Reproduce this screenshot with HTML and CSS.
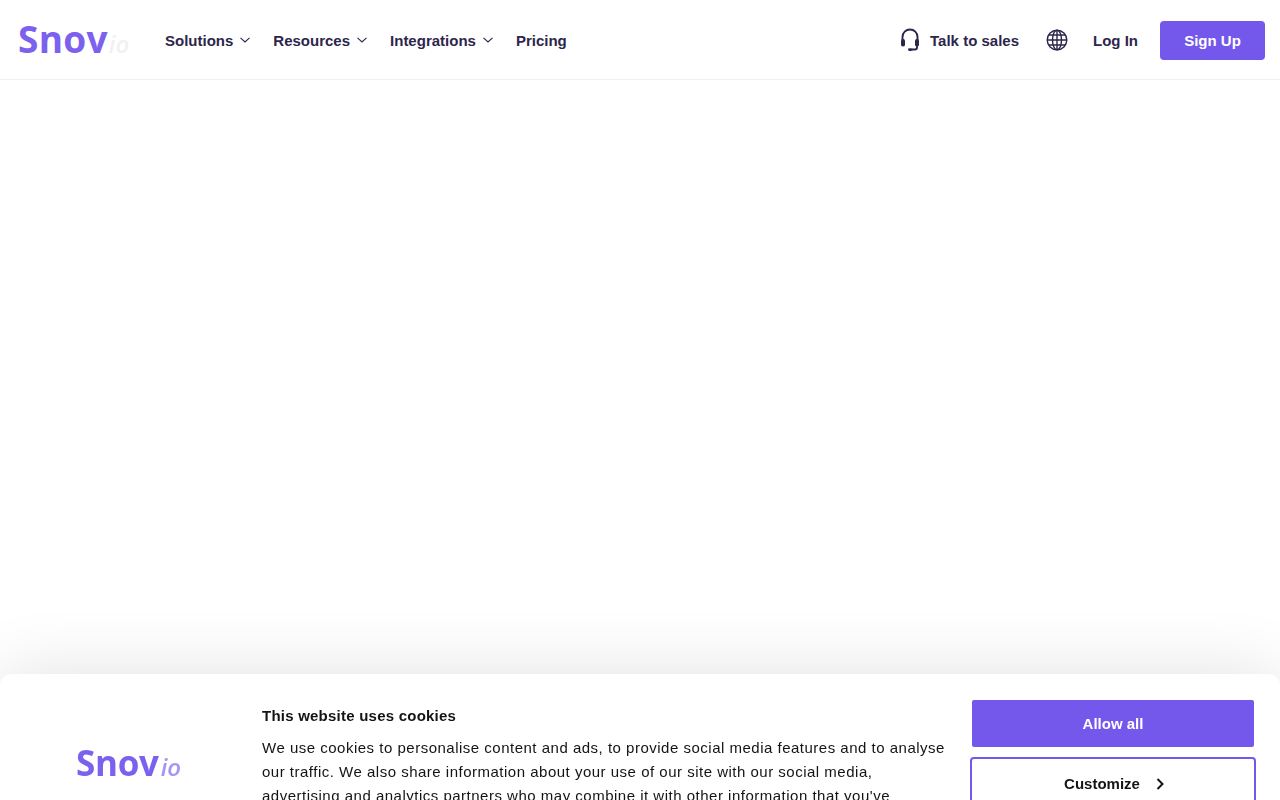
FILE: index.html
```html
<!DOCTYPE html>
<html lang="en">
<head>
    <meta charset="UTF-8">
    <meta name="viewport" content="width=device-width, initial-scale=1.0">
    <title>Snov.io</title>
    <link rel="stylesheet" href="styles.css">
</head>
<body>
    <header class="site-header">
        <a class="logo" href="#"><span class="logo-main">Snov</span><span class="logo-io">io</span></a>
        <nav class="main-nav">
            <a href="#">Solutions <svg class="chevron" viewBox="0 0 10 6"><path d="M.5.8 5 5 9.500.8"/></svg></a>
            <a href="#">Resources <svg class="chevron" viewBox="0 0 10 6"><path d="M.5.8 5 5 9.500.8"/></svg></a>
            <a href="#">Integrations <svg class="chevron" viewBox="0 0 10 6"><path d="M.5.8 5 5 9.500.8"/></svg></a>
            <a href="#">Pricing</a>
        </nav>
        <div class="header-actions">
            <a class="sales-link" href="#">
                <svg class="headset" viewBox="0 0 20 24">
                    <path class="line" d="M2.500 12V9a7.500 7.500 0 0 1 15 0v3"/>
                    <rect x="1" y="11" width="4" height="7.500" rx="1.800"/>
                    <rect x="15" y="11" width="4" height="7.500" rx="1.800"/>
                    <path class="line" d="M17 18v1.500a2 2 0 0 1-2 2h-3"/>
                    <rect x="8" y="20.300" width="4.500" height="2.600" rx="1.300"/>
                </svg>
                Talk to sales
            </a>
            <svg class="globe" viewBox="0 0 22 22">
                <circle cx="11" cy="11" r="9.800"/>
                <ellipse cx="11" cy="11" rx="4.500" ry="9.800"/>
                <path d="M11 1.200v19.600M1.200 11h19.600M2.600 6h16.800M2.600 16h16.800"/>
            </svg>
            <a class="login-link" href="#">Log In</a>
            <a class="signup-btn" href="#">Sign Up</a>
        </div>
    </header>

    <div class="cookie-banner">
        <div class="cookie-logo">
            <a class="logo logo-small" href="#"><span class="logo-main">Snov</span><span class="logo-io">io</span></a>
        </div>
        <div class="cookie-text">
            <h2>This website uses cookies</h2>
            <p>We use cookies to personalise content and ads, to provide social media features and to analyse our traffic. We also share information about your use of our site with our social media, advertising and analytics partners who may combine it with other information that you've provided to them or that they've collected from your use of their services.</p>
        </div>
        <div class="cookie-buttons">
            <button class="allow-btn">Allow all</button>
            <button class="customize-btn">Customize <svg class="customize-arrow" viewBox="0 0 8 12"><path d="M1.500 1 6.500 6l-5 5"/></svg></button>
        </div>
    </div>
</body>
</html>
```

FILE: styles.css
```css
html, body {
    height: 100%;
}

body {
    font-family: "Liberation Sans", Arial, sans-serif;
    margin: 0;
    padding: 0;
    background-color: #fff;
    color: #2d264c;
    overflow: hidden;
}

a {
    color: inherit;
    text-decoration: none;
}

.site-header {
    display: flex;
    align-items: center;
    height: 77px;
    padding: 2px 15px 0 18px;
    border-bottom: 1px solid #f0f0f2;
}

.logo {
    display: flex;
    align-items: baseline;
    width: 147px;
    margin-top: -5px;
    font-family: "Open Sans", sans-serif;
    font-size: 37px;
    line-height: 1;
    font-weight: 700;
    letter-spacing: 0.3px;
}

.logo-main {
    color: #7b61ee;
}

.logo-io {
    margin-left: 1px;
    font-size: 24px;
    font-style: italic;
    font-weight: 600;
    letter-spacing: 0;
    color: #f1f1f3;
}

.main-nav {
    display: flex;
    align-items: center;
    gap: 23px;
    font-size: 15px;
    font-weight: 700;
}

.main-nav a {
    display: flex;
    align-items: center;
    gap: 7px;
}

.chevron {
    width: 10px;
    height: 6px;
    margin-top: -2px;
    fill: none;
    stroke: #2d264c;
    stroke-width: 1.100;
}

.header-actions {
    display: flex;
    align-items: center;
    margin-left: auto;
    font-size: 15px;
    font-weight: 700;
}

.sales-link {
    display: flex;
    align-items: center;
    gap: 10px;
}

.headset {
    width: 20px;
    height: 24px;
    margin-top: -2px;
    fill: #2d264c;
}

.headset .line {
    fill: none;
    stroke: #2d264c;
    stroke-width: 1.900;
}

.globe {
    width: 22px;
    height: 22px;
    margin-top: -2px;
    margin-left: 27px;
    fill: none;
    stroke: #2d264c;
    stroke-width: 1.400;
}

.login-link {
    margin-left: 25px;
}

.signup-btn {
    margin-left: 22px;
    width: 105px;
    height: 39px;
    line-height: 39px;
    text-align: center;
    color: #fff;
    background-color: #7358eb;
    border-radius: 4px;
}

.cookie-banner {
    position: fixed;
    top: 674px;
    left: 0;
    right: 0;
    display: flex;
    height: 220px;
    background-color: #fff;
    border-radius: 12px 12px 0 0;
    box-shadow: 0 0 70px rgba(0, 0, 0, 0.12);
    color: #141414;
}

.cookie-logo {
    width: 262px;
    padding: 71px 0 0 76px;
    box-sizing: border-box;
}

.logo-small {
    width: auto;
    margin-top: 0;
    font-size: 35px;
    letter-spacing: -0.3px;
}

.logo-small .logo-io {
    margin-left: 2px;
    font-size: 24px;
    color: #a794f5;
}

.cookie-text {
    width: 690px;
    padding-top: 33px;
    box-sizing: border-box;
}

.cookie-text h2 {
    margin: 0 0 11px;
    font-size: 15px;
    line-height: 18px;
    font-weight: 700;
    letter-spacing: 0.23px;
}

.cookie-text p {
    margin: 0;
    font-size: 15px;
    line-height: 24px;
    letter-spacing: 0.5px;
}

.cookie-buttons {
    display: flex;
    flex-direction: column;
    align-items: center;
    gap: 10px;
    width: 286px;
    margin-left: 18px;
    padding-top: 26px;
}

.cookie-buttons button {
    font-family: inherit;
    font-size: 15px;
    font-weight: 700;
    cursor: pointer;
}

.allow-btn {
    width: 282px;
    height: 47px;
    color: #fff;
    background-color: #7358eb;
    border: 0;
    border-radius: 2px;
}

.customize-btn {
    display: flex;
    align-items: center;
    justify-content: center;
    gap: 16px;
    width: 286px;
    height: 54px;
    padding: 0 0 2px 2px;
    color: #141414;
    background-color: #fff;
    border: 2px solid #7358eb;
    border-radius: 4px;
}

.customize-arrow {
    width: 8px;
    height: 12px;
    margin-top: 2px;
    fill: none;
    stroke: #141414;
    stroke-width: 2;
}
```
